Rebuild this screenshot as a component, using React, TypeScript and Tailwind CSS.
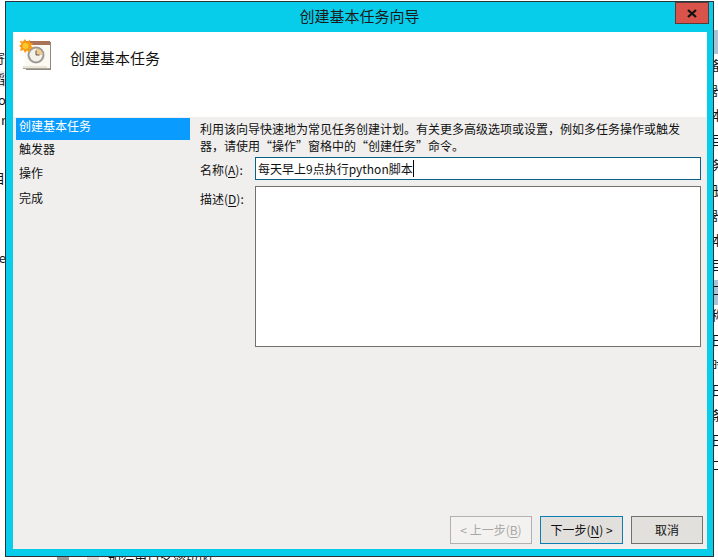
const cjk = { fontFamily: '"Noto Sans CJK SC", "Noto Sans", sans-serif' };

const rightGlyphs = ["备", "器", "本", "目", "务", "册", "器", "本", "目", "口", "称", "日", "时", "日", "条", "日", "口"];

function TaskIcon() {
  return (
    <svg width="32" height="32" viewBox="0 0 32 32" className="block">
      <rect x="7" y="3" width="25" height="28" fill="#8e8a82" />
      <rect x="6" y="4" width="25" height="25" fill="#fbf9f2" />
      <rect x="6" y="2" width="25" height="4" fill="#a9735a" />
      <rect x="4" y="27" width="24" height="2" fill="#e8e4d8" />
      <rect x="4" y="29" width="27" height="1" fill="#a8a498" />
      <circle cx="17" cy="16" r="8.5" fill="#9a9a96" />
      <circle cx="17" cy="16" r="6.5" fill="#f4f1e8" />
      <path d="M17 9.5 A6.5 6.5 0 0 1 23.5 16 L17 16 Z" fill="#f3c98c" />
      <path d="M17 11.5 V16 H20.5" stroke="#5a5a58" strokeWidth="1" fill="none" />
      <path d="M6 0 L8 3 L11 0.5 L11 4 L14 4 L12 7 L14.5 9 L11 10 L11 13.5 L8 11.5 L6 14 L4.5 11 L1 12 L2 8.5 L0 7 L2.5 5 L0.5 2 L4 2.5 Z" fill="#f79a14" />
      <circle cx="6.5" cy="7" r="3" fill="#fdc82f" />
    </svg>
  );
}

function Mn({ c }: { c: string }) {
  return <span className="underline underline-offset-2">{c}</span>;
}

export default function App() {
  return (
    <div className="relative w-[718px] h-[560px] overflow-hidden bg-white text-[12px] leading-[16px] text-[#111]" style={cjk}>
      {/* application behind the dialog */}
      <div className="absolute left-[-8px] top-[50px] flex flex-col text-[13px] leading-[16px] w-[14px]">
        <span>寄</span>
        <span className="mt-[5px] bg-[#eeeeee]">稻</span>
        <span className="mt-[5px] text-right">o</span>
        <span className="mt-[4px] text-right">r</span>
        <span className="mt-[42px]">目</span>
        <span className="mt-[64px] text-right">e</span>
      </div>
      <div className="absolute left-[713px] top-[30px] w-[5px] h-[24px] bg-[#a9c3d8]" />
      <div className="absolute left-[713px] top-[280px] w-[5px] h-[25px] bg-[#a9c3d8]" />
      <div className="absolute left-[711px] top-[57px] flex flex-col gap-[9px] text-[13px] leading-[16px]">
        {rightGlyphs.map((g, i) => (
          <span key={i}>{g}</span>
        ))}
      </div>
      <div className="absolute left-[57px] top-[550px] flex items-start gap-[18px] text-[13px] leading-[16px] whitespace-nowrap">
        <span className="block w-[12px] h-[10px] bg-[#9a9a9a]" />
        <span className="block w-[12px] h-[10px] bg-[#d8d8d8]" />
        <span className="-ml-[9px] mt-[2px]">如行用户名密码的</span>
      </div>

      {/* dialog window */}
      <div className="absolute left-[5px] top-[1px] w-[709px] h-[556px] flex flex-col border border-[#26343c] bg-[#08cdea]">
        <div className="relative h-[30px] shrink-0 text-center text-[15px] leading-[28px] text-[#1a1a1a]">
          创建基本任务向导
          <div className="absolute right-[4px] top-0 w-[34px] h-[22px] flex items-center justify-center bg-[#d9534a] border border-[#5a3a38]">
            <svg width="10" height="9" viewBox="0 0 10 9">
              <path d="M1 1 L9 8 M9 1 L1 8" stroke="#111" strokeWidth="2.2" />
            </svg>
          </div>
        </div>

        <div className="ml-[7px] mr-[6px] mb-[7px] flex-1 flex flex-col bg-[#f0efee]">
          <div className="h-[85px] shrink-0 bg-white flex items-start pl-[6px] pt-[7px]">
            <TaskIcon />
            <span className="ml-[19px] mt-[9px] text-[15px] leading-[20px] text-[#111]">创建基本任务</span>
          </div>

          <div className="flex-1 flex flex-col">
            <div className="flex-1 flex">
              <div className="w-[177px] shrink-0 pl-[3px] pt-[1px]">
                <div className="h-[22px] pl-[3px] leading-[15px] bg-[#0a9bff] text-white">创建基本任务</div>
                <div className="pl-[3px] mt-[1px] h-[24px] leading-[16px]">触发器</div>
                <div className="pl-[3px] h-[24px] leading-[16px]">操作</div>
                <div className="pl-[3px] h-[24px] leading-[18px]">完成</div>
              </div>
              <div className="flex-1 min-w-0 pl-[10px] pr-[6px] pt-[3px]">
                <p className="leading-[17px] whitespace-nowrap">
                  利用该向导快速地为常见任务创建计划。有关更多高级选项或设置，例如多任务操作或触发
                  <br />
                  器，请使用“操作”窗格中的“创建任务”命令。
                </p>
                <div className="flex mt-[3px] h-[23px]">
                  <span className="w-[55px] shrink-0 pt-[5px]">
                    名称(<Mn c="A" />):
                  </span>
                  <div className="flex-1 border border-[#0a5f84] bg-white pl-[2px] text-[12px] leading-[21px] flex">
                    每天早上9点执行python脚本
                    <span className="w-px h-[17px] mt-[2px] bg-black" />
                  </div>
                </div>
                <div className="flex mt-[6px] h-[161px]">
                  <span className="w-[55px] shrink-0 pt-[5px]">
                    描述(<Mn c="D" />):
                  </span>
                  <div className="flex-1 border border-[#73716d] bg-white" />
                </div>
              </div>
            </div>

            <div className="h-[33px] shrink-0 flex justify-end pr-[4px] gap-[8px]">
              <button className="w-[82px] h-[28px] border border-[#b3b1ae] bg-[#f3f2f0] text-[#a9a8a5]">
                &lt; 上一步(<Mn c="B" />)
              </button>
              <button className="w-[83px] h-[28px] border border-[#0f7fb0] bg-[#e1e0dc]">
                下一步(<Mn c="N" />) &gt;
              </button>
              <button className="w-[72px] h-[28px] border border-[#73716d] bg-[#e1e0dc]">取消</button>
            </div>
          </div>
        </div>
      </div>
    </div>
  );
}
